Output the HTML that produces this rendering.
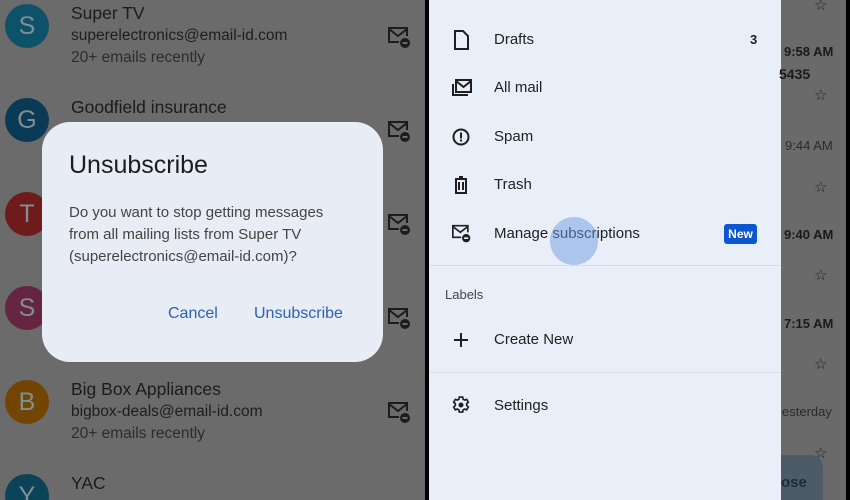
<!DOCTYPE html>
<html style="width:850px;height:500px;overflow:hidden"><head><meta charset="utf-8"><style>
*{margin:0;padding:0;box-sizing:border-box}
body{width:850px;height:500px;overflow:hidden;background:#000;font-family:"Liberation Sans",Arial,sans-serif;position:relative}
.abs{position:absolute}
#left{left:0;top:0;width:425px;height:500px;background:#6b6b6b}
.av{position:absolute;left:5px;width:44px;height:44px;border-radius:50%;color:#7f8f96;font-size:25px;text-align:center;line-height:44px}
.nm{position:absolute;left:71px;font-size:17.5px;color:#1b1b1b;white-space:nowrap}
.em{position:absolute;left:71px;font-size:15.5px;color:#1e1e1e;white-space:nowrap}
.rc{position:absolute;left:71px;font-size:15.5px;color:#2c2c2c;white-space:nowrap}
.mi{position:absolute;left:387px}
#dlg{left:42px;top:122px;width:341px;height:240px;border-radius:28px;background:#e8ecf4}
#drawer{left:429px;top:0;width:352px;height:500px;background:#e9eff8}
#rg{left:781px;top:0;width:65px;height:500px;background:#6a6a6a}
.it{position:absolute;left:65px;font-size:15px;color:#1f1f1f;white-space:nowrap}
.ic{position:absolute;left:22px}
.tm{position:absolute;font-size:13px;color:#1a1a1a;white-space:nowrap;font-weight:bold}
.st{position:absolute;left:814px;font-size:15px;color:#222}
</style></head><body>
<div id="left" class="abs">
 <div class="av" style="top:4px;background:#0d5268">S</div>
 <div class="nm" style="top:3px">Super TV</div>
 <div class="em" style="top:27px">superelectronics@email-id.com</div>
 <div class="rc" style="top:49px">20+ emails recently</div>
 <div class="av" style="top:98px;background:#0b3a56">G</div>
 <div class="nm" style="top:97px">Goodfield insurance</div>
 <div class="av" style="top:192px;background:#701b1b">T</div>
 <div class="av" style="top:286px;background:#652440">S</div>
 <div class="av" style="top:380px;background:#724503">B</div>
 <div class="nm" style="top:379px">Big Box Appliances</div>
 <div class="em" style="top:403px">bigbox-deals@email-id.com</div>
 <div class="rc" style="top:425px">20+ emails recently</div>
 <div class="av" style="top:474px;background:#0b4358">Y</div>
 <div class="nm" style="top:473px">YAC</div>
 <svg class="mi" style="top:26px" width="26" height="24" viewBox="0 0 26 24"><g fill="none" stroke="#1c1c1c" stroke-width="2"><path d="M12 16H2V2h18v8"/><path d="M2 3l9 7 9-7"/></g><circle cx="18" cy="17" r="5" fill="#1c1c1c"/><rect x="15.5" y="16" width="5" height="2" fill="#6b6b6b"/></svg>
 <svg class="mi" style="top:120px" width="26" height="24" viewBox="0 0 26 24"><g fill="none" stroke="#1c1c1c" stroke-width="2"><path d="M12 16H2V2h18v8"/><path d="M2 3l9 7 9-7"/></g><circle cx="18" cy="17" r="5" fill="#1c1c1c"/><rect x="15.5" y="16" width="5" height="2" fill="#6b6b6b"/></svg>
 <svg class="mi" style="top:213px" width="26" height="24" viewBox="0 0 26 24"><g fill="none" stroke="#1c1c1c" stroke-width="2"><path d="M12 16H2V2h18v8"/><path d="M2 3l9 7 9-7"/></g><circle cx="18" cy="17" r="5" fill="#1c1c1c"/><rect x="15.5" y="16" width="5" height="2" fill="#6b6b6b"/></svg>
 <svg class="mi" style="top:307px" width="26" height="24" viewBox="0 0 26 24"><g fill="none" stroke="#1c1c1c" stroke-width="2"><path d="M12 16H2V2h18v8"/><path d="M2 3l9 7 9-7"/></g><circle cx="18" cy="17" r="5" fill="#1c1c1c"/><rect x="15.5" y="16" width="5" height="2" fill="#6b6b6b"/></svg>
 <svg class="mi" style="top:401px" width="26" height="24" viewBox="0 0 26 24"><g fill="none" stroke="#1c1c1c" stroke-width="2"><path d="M12 16H2V2h18v8"/><path d="M2 3l9 7 9-7"/></g><circle cx="18" cy="17" r="5" fill="#1c1c1c"/><rect x="15.5" y="16" width="5" height="2" fill="#6b6b6b"/></svg>
</div>
<div id="dlg" class="abs">
 <div class="abs" style="left:27px;top:29px;font-size:25px;color:#1d1d1d">Unsubscribe</div>
 <div class="abs" style="left:27px;top:80px;font-size:15px;line-height:22px;color:#444">Do you want to stop getting messages<br>from all mailing lists from Super TV<br>(superelectronics@email-id.com)?</div>
 <div class="abs" style="left:126px;top:183px;font-size:16px;color:#2a62b8">Cancel</div>
 <div class="abs" style="left:212px;top:183px;font-size:16px;color:#2a62b8">Unsubscribe</div>
</div>
<div id="drawer" class="abs">
 <svg class="ic" style="top:29px" width="20" height="22" viewBox="0 0 20 22"><path d="M4 2h8l5 5v13H4z" fill="none" stroke="#1f1f1f" stroke-width="2"/></svg>
 <div class="it" style="top:31px">Drafts</div>
 <div class="abs" style="left:321px;top:32px;font-size:13px;font-weight:bold;color:#1f1f1f">3</div>
 <svg class="ic" style="top:78px" width="22" height="20" viewBox="0 0 22 20"><g fill="none" stroke="#1f1f1f" stroke-width="2"><rect x="5" y="2" width="15" height="12"/><path d="M5 3l7.5 6L20 3"/><path d="M2 6v11h15"/></g></svg>
 <div class="it" style="top:79px">All mail</div>
 <svg class="ic" style="top:127px" width="20" height="20" viewBox="0 0 20 20"><circle cx="10" cy="10" r="7.5" fill="none" stroke="#1f1f1f" stroke-width="2"/><rect x="9" y="5.5" width="2" height="6" fill="#1f1f1f"/><rect x="9" y="12.5" width="2" height="2" fill="#1f1f1f"/></svg>
 <div class="it" style="top:128px">Spam</div>
 <svg class="ic" style="top:175px" width="20" height="20" viewBox="0 0 20 20"><g fill="none" stroke="#1f1f1f" stroke-width="2"><path d="M4 4h12M5 4v14h10V4M8 2h4M8 7v8M12 7v8"/></g></svg>
 <div class="it" style="top:176px">Trash</div>
 <svg class="ic" style="top:224px" width="22" height="20" viewBox="0 0 26 24"><g fill="none" stroke="#1f1f1f" stroke-width="2"><path d="M12 16H2V2h18v8"/><path d="M2 3l9 7 9-7"/></g><circle cx="18" cy="17" r="5" fill="#1f1f1f"/><rect x="15.5" y="16" width="5" height="2" fill="#e9eff8"/></svg>
 <div class="it" style="top:225px">Manage subscriptions</div>
 <div class="abs" style="left:295px;top:224px;width:33px;height:20px;border-radius:3px;background:#0b57d0;color:#fff;font-size:12px;font-weight:bold;text-align:center;line-height:20px">New</div>
 <div class="abs" style="left:121px;top:217px;width:48px;height:48px;border-radius:50%;background:rgba(110,155,225,0.5)"></div>
 <div class="abs" style="left:0;top:265px;width:352px;height:1px;background:#d8dde5"></div>
 <div class="abs" style="left:16px;top:287px;font-size:13px;color:#444">Labels</div>
 <svg class="ic" style="top:330px" width="20" height="20" viewBox="0 0 20 20"><path d="M10 3v14M3 10h14" stroke="#1f1f1f" stroke-width="2"/></svg>
 <div class="it" style="top:331px">Create New</div>
 <div class="abs" style="left:0;top:372px;width:352px;height:1px;background:#d8dde5"></div>
 <svg class="ic" style="top:395px" width="20" height="20" viewBox="0 0 24 24"><path fill="none" stroke="#1f1f1f" stroke-width="2" d="M10 2.5h4l.5 2.6 1.8 1 2.5-.9 2 3.4-2 1.8v2.2l2 1.8-2 3.4-2.5-.9-1.8 1-.5 2.6h-4l-.5-2.6-1.8-1-2.5.9-2-3.4 2-1.8v-2.2l-2-1.8 2-3.4 2.5.9 1.8-1z"/><circle cx="12" cy="12" r="3" fill="#1f1f1f"/></svg>
 <div class="it" style="top:397px">Settings</div>
</div>
<div id="rg" class="abs"></div>
<div class="tm" style="left:784px;top:44px">9:58 AM</div>
<div class="tm" style="left:779px;top:66px;font-size:14px">5435</div>
<div class="tm" style="left:785px;top:138px;font-weight:normal;color:#2a2a2a">9:44 AM</div>
<div class="tm" style="left:784px;top:227px">9:40 AM</div>
<div class="tm" style="left:784px;top:316px">7:15 AM</div>
<div class="tm" style="left:782px;top:404px;font-weight:normal;color:#2a2a2a">esterday</div>
<div class="st" style="top:-4px">☆</div>
<div class="st" style="top:86px">☆</div>
<div class="st" style="top:178px">☆</div>
<div class="st" style="top:266px">☆</div>
<div class="st" style="top:355px">☆</div>
<div class="st" style="top:444px">☆</div>
<div class="abs" style="left:781px;top:455px;width:42px;height:45px;border-radius:0 12px 0 0;background:#4d5a68"></div>
<div class="abs" style="left:781px;top:474px;font-size:15px;font-weight:bold;color:#1e2b3a">ose</div>
<div class="abs" style="left:846px;top:0;width:4px;height:500px;background:#000"></div>
</body></html>
